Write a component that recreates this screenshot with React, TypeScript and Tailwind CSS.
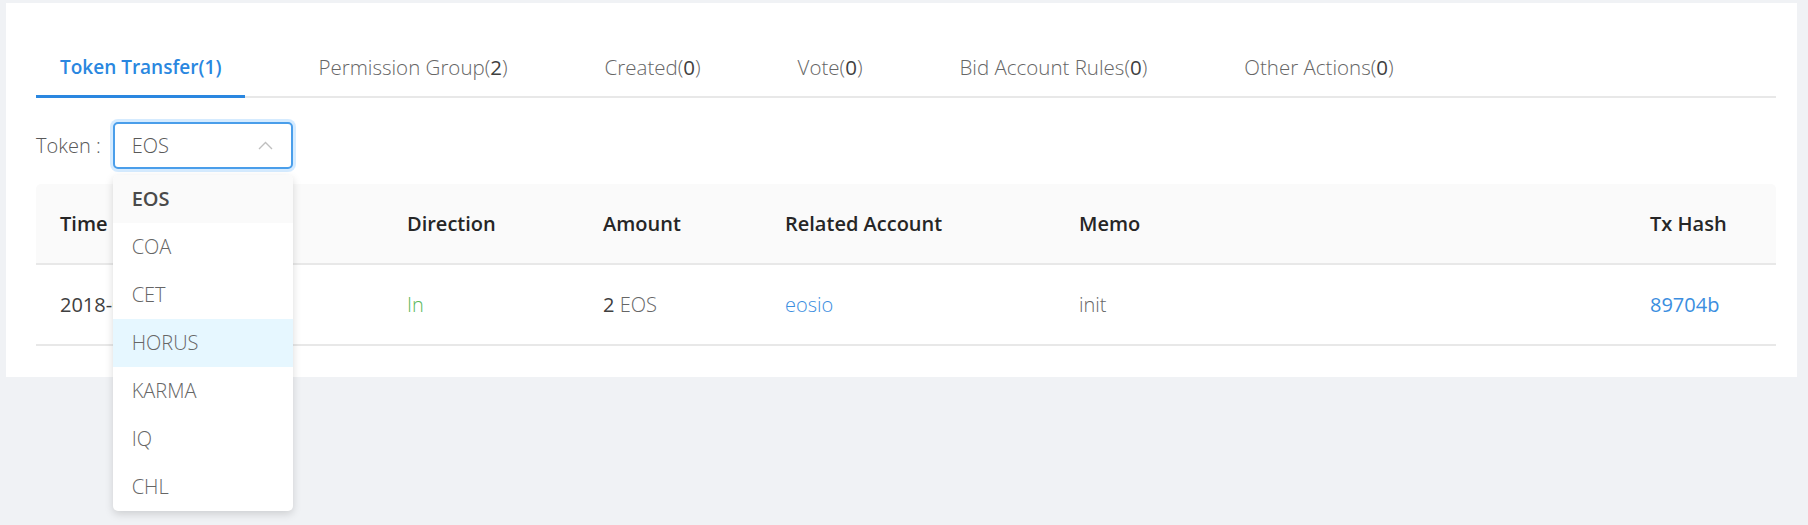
import React from "react";

const tabs = [
  "Token Transfer(1)",
  "Permission Group(2)",
  "Created(0)",
  "Vote(0)",
  "Bid Account Rules(0)",
  "Other Actions(0)",
];

const tokens = ["EOS", "COA", "CET", "HORUS", "KARMA", "IQ", "CHL"];

// digits in the screenshot render a bit heavier than letters
function Mixed({ text, digitClass }: { text: string; digitClass: string }) {
  return (
    <>
      {text.split(/(\d+)/).map((part, i) =>
        /^\d+$/.test(part) ? (
          <span key={i} className={digitClass}>
            {part}
          </span>
        ) : (
          <span key={i}>{part}</span>
        )
      )}
    </>
  );
}

function ChevronUp() {
  return (
    <svg width="15" height="9" viewBox="0 0 15 9" fill="none">
      <polyline points="1,8 7.5,1.5 14,8" stroke="#bfbfbf" strokeWidth="1.4" />
    </svg>
  );
}

function TokenSelect() {
  return (
    <div className="relative">
      <div className="w-[180px] h-[47px] rounded-[5px] border-2 border-[#4a9eea] shadow-[0_0_0_3px_rgba(24,144,255,0.18)] bg-white flex items-center justify-between pl-[17px] pr-[18px]">
        <span className="text-[#595959] font-light">EOS</span>
        <ChevronUp />
      </div>
      <div className="absolute left-0 top-[53px] z-10 w-[180px] bg-white rounded-[5px] shadow-[0_3px_8px_rgba(0,0,0,0.15)] overflow-hidden">
        {tokens.map((t, i) => (
          <div
            key={t}
            className={
              "h-[48px] pl-[19px] flex items-center " +
              (i === 0
                ? "bg-[#fafafa] font-semibold text-[#4a4a4a]"
                : t === "HORUS"
                ? "bg-[#e6f7ff] font-light text-[#666666]"
                : "font-light text-[#666666]")
            }
          >
            {t}
          </div>
        ))}
      </div>
    </div>
  );
}

const cols = [
  { label: "Time", w: "w-[347px]" },
  { label: "Direction", w: "w-[196px]" },
  { label: "Amount", w: "w-[182px]" },
  { label: "Related Account", w: "w-[294px]" },
  { label: "Memo", w: "w-[571px]" },
  { label: "Tx Hash", w: "w-[150px]" },
];

export default function App() {
  return (
    <div
      className="min-h-[525px] bg-[#f0f2f5] pt-[3px] pl-[6px] pr-[11px] text-[20px] text-[#595959]"
      style={{ fontFamily: '"Open Sans", "Noto Sans", sans-serif' }}
    >
      <div className="bg-white pt-[49px] pb-[31px] pl-[30px] pr-[21px]">
        {/* tabs */}
        <div className="flex gap-[49px] border-b-2 border-[#e8e8e8]">
          {tabs.map((t, i) => (
            <div
              key={t}
              className={
                "relative px-[24px] pb-[14px] leading-[30px] whitespace-nowrap " +
                (i === 0
                  ? "text-[19px] text-[#2a87e0] font-semibold"
                  : "text-[20.5px] text-[#666666] font-light")
              }
            >
              <Mixed text={t} digitClass={i === 0 ? "" : "font-normal text-[#404040]"} />
              {i === 0 && (
                <div className="absolute left-0 right-0 bottom-[-2px] h-[3px] bg-[#2a87e0]" />
              )}
            </div>
          ))}
        </div>

        {/* filter */}
        <div className="mt-[24px] flex items-center">
          <span className="mr-[12px] font-light text-[#595959]">Token :</span>
          <TokenSelect />
        </div>

        {/* table */}
        <div className="mt-[15px]">
          <div className="flex h-[81px] bg-[#fafafa] rounded-t-[5px] border-b-2 border-[#e8e8e8] items-center">
            {cols.map((c) => (
              <div key={c.label} className={c.w + " pl-[24px] font-semibold text-[#262626]"}>
                {c.label}
              </div>
            ))}
          </div>
          <div className="flex h-[81px] border-b-2 border-[#e8e8e8] items-center">
            <div className="w-[347px] pl-[24px] text-[#404040]">2018-06-09 11:56:31</div>
            <div className="w-[196px] pl-[24px] text-[#5cb85c] font-light">In</div>
            <div className="w-[182px] pl-[24px]">
              <span className="text-[#404040]">2</span>{" "}
              <span className="font-light text-[#666666]">EOS</span>
            </div>
            <div className="w-[294px] pl-[24px] text-[#3b8ee0] font-light">eosio</div>
            <div className="w-[571px] pl-[24px] font-light text-[#666666]">init</div>
            <div className="w-[150px] pl-[24px] text-[#3b8ee0]">
              <Mixed text="89704b" digitClass="" />
            </div>
          </div>
        </div>
      </div>
    </div>
  );
}
